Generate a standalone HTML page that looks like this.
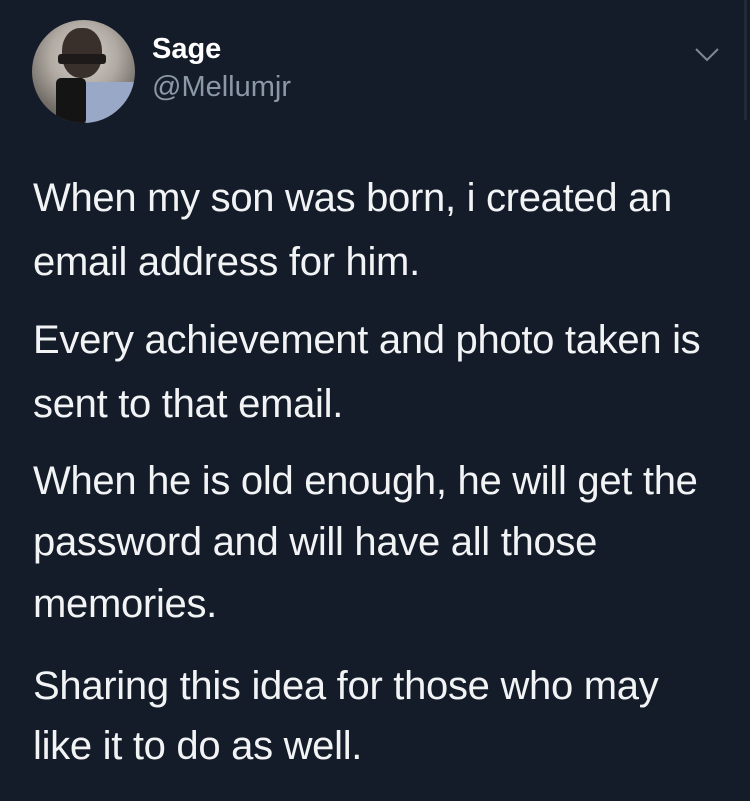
<!DOCTYPE html>
<html><head><meta charset="utf-8"><style>
html,body{margin:0;padding:0;background:#151c29;width:750px;height:801px;overflow:hidden;font-family:"Liberation Sans",sans-serif}
.l{position:absolute;left:33px;color:#f2f3f5;font-size:40px;letter-spacing:-0.3px;white-space:nowrap;line-height:40px}
</style></head><body>
<div style="position:absolute;left:32px;top:20px;width:103px;height:103px;border-radius:50%;background:radial-gradient(circle at 50% 35%,#d4d0ca 0%,#b0aaa3 40%,#76706a 70%,#4a4440 100%);overflow:hidden">
<div style="position:absolute;left:30px;top:8px;width:40px;height:50px;border-radius:45%;background:#3a302b"></div>
<div style="position:absolute;left:26px;top:34px;width:48px;height:10px;background:#1d1a19;border-radius:3px"></div>
<div style="position:absolute;left:24px;top:58px;width:30px;height:46px;background:#141414;border-radius:5px"></div>
<div style="position:absolute;left:54px;top:62px;width:50px;height:45px;background:#9aa8c8"></div>
</div>
<div style="position:absolute;left:152px;top:33px;color:#fff;font-size:29px;font-weight:bold;letter-spacing:0px">Sage</div>
<div style="position:absolute;left:152px;top:71px;color:#8b98a8;font-size:29px;letter-spacing:0px">@Mellumjr</div>
<svg style="position:absolute;left:694px;top:46px" width="26" height="18" viewBox="0 0 26 18"><path d="M2 3 L13 14 L24 3" fill="none" stroke="#7d8898" stroke-width="2"/></svg>
<div style="position:absolute;left:744px;top:0;width:3px;height:120px;background:#232a37"></div>
<div class="l" style="top:178px">When my son was born, i created an</div>
<div class="l" style="top:242px">email address for him.</div>
<div class="l" style="top:320px">Every achievement and photo taken is</div>
<div class="l" style="top:384px">sent to that email.</div>
<div class="l" style="top:461px">When he is old enough, he will get the</div>
<div class="l" style="top:522px">password and will have all those</div>
<div class="l" style="top:584px">memories.</div>
<div class="l" style="top:666px">Sharing this idea for those who may</div>
<div class="l" style="top:726px">like it to do as well.</div>
</body></html>
